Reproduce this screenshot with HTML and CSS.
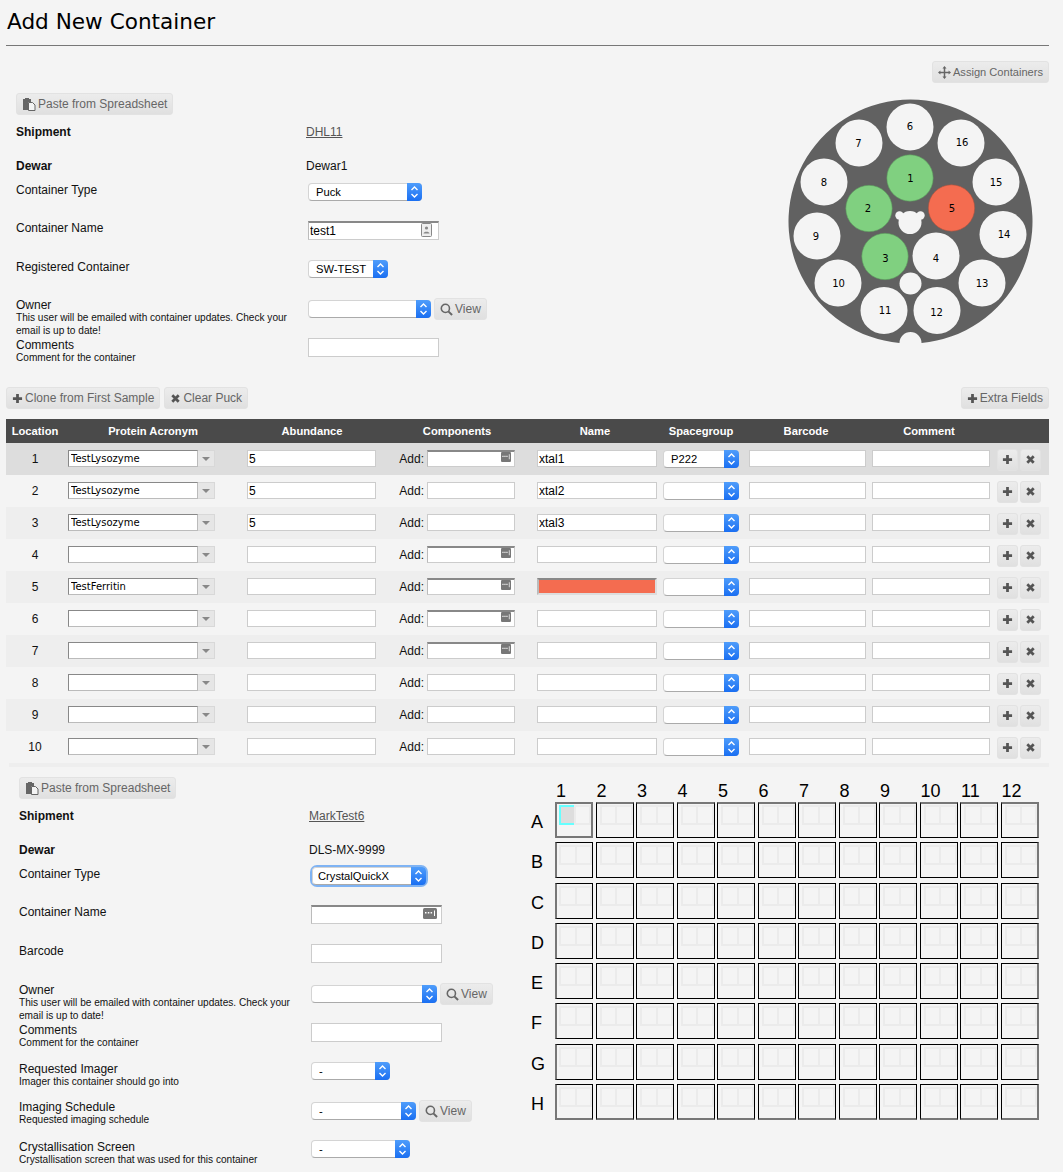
FILE: index.html
```html
<!DOCTYPE html>
<html lang="en">
<head>
    <meta charset="UTF-8">
    <meta name="viewport" content="width=device-width, initial-scale=1.0">
    <title>Add New Container</title>
    <link rel="stylesheet" href="styles.css">
</head>
<body>
    <!-- shared icons -->
    <svg class="sprite" aria-hidden="true">
        <symbol id="i-chevrons" viewBox="0 0 15 18"><path d="M4.5 7 7.5 4 10.5 7M4.5 11 7.5 14 10.5 11" fill="none" stroke="#fff" stroke-width="1.4"/></symbol>
        <symbol id="i-paste" viewBox="0 0 14 14"><path d="M1 2H3V1H7V2H9V5H6V13H1Z" fill="#666"/><path d="M6.500 5.500H10.500L13 8V13.500H6.500Z" fill="#f4f4f4" stroke="#666"/></symbol>
        <symbol id="i-move" viewBox="0 0 14 14"><path d="M7 0 9.200 2.600H7.800V6.200H11.400V4.800L14 7 11.400 9.200V7.800H7.800V11.400H9.200L7 14 4.800 11.400H6.200V7.800H2.600V9.200L0 7 2.600 4.800V6.200H6.200V2.600H4.800Z" fill="#666"/></symbol>
        <symbol id="i-plus" viewBox="0 0 12 12"><path d="M1 6H11M6 1V11" stroke="#555" stroke-width="3" fill="none"/></symbol>
        <symbol id="i-times" viewBox="0 0 12 12"><path d="M2.500 2.500 9.500 9.500M9.500 2.500 2.500 9.500" stroke="#555" stroke-width="3" fill="none"/></symbol>
        <symbol id="i-search" viewBox="0 0 14 14"><circle cx="5.800" cy="5.800" r="4.400" fill="none" stroke="#666" stroke-width="1.700"/><path d="M9 9 13 13" stroke="#666" stroke-width="2.200"/></symbol>
        <symbol id="i-dots" viewBox="0 0 14 11" preserveAspectRatio="none"><rect width="14" height="11" rx="1.500" fill="#777"/><path d="M2 4H3.500V5.500H2ZM4.800 4H6.300V5.500H4.800ZM7.600 4H9.100V5.500H7.600ZM11 2.500H12V8H11Z" fill="#fff"/></symbol>
        <symbol id="i-card" viewBox="0 0 11 14"><rect x=".5" y=".5" width="10" height="13" rx="1" fill="#eee" stroke="#888"/><circle cx="5.500" cy="5" r="1.600" fill="#888"/><path d="M2.500 10.500C2.500 8 8.500 8 8.500 10.500Z" fill="#888"/></symbol>
    </svg>

    <header class="page-title"><h1>Add New Container</h1></header>

    <div class="top-actions">
        <button class="btn btn-assign"><svg class="icon icon-search"><use href="#i-move"/></svg>Assign Containers</button>
    </div>

    <section class="puck-section">
        <form class="form form-puck">
            <button type="button" class="btn btn-paste"><svg class="icon"><use href="#i-paste"/></svg>Paste from Spreadsheet</button>
            <div class="row h34"><div class="label"><strong>Shipment</strong></div><div class="value"><a href="#">DHL11</a></div></div>
            <div class="row h24"><div class="label"><strong>Dewar</strong></div><div class="value">Dewar1</div></div>
            <div class="row h38"><div class="label">Container Type</div><div class="control"><div class="aqua w114"><select><option>Puck</option></select><span class="cap"><svg><use href="#i-chevrons"/></svg></span></div></div></div>
            <div class="row h39"><div class="label">Container Name</div><div class="control"><div class="field field-tall"><input type="text" class="dark-top" value="test1"><svg class="field-icon card"><use href="#i-card"/></svg></div></div></div>
            <div class="row h38"><div class="label">Registered Container</div><div class="control"><div class="aqua w80"><select><option>SW-TEST</option></select><span class="cap"><svg><use href="#i-chevrons"/></svg></span></div></div></div>
            <div class="row h40"><div class="label">Owner<span class="hint">This user will be emailed with container updates. Check your email is up to date!</span></div><div class="control with-view"><div class="aqua w123"><select><option></option></select><span class="cap"><svg><use href="#i-chevrons"/></svg></span></div><button type="button" class="btn"><svg class="icon icon-search"><use href="#i-search"/></svg>View</button></div></div>
            <div class="row h28"><div class="label">Comments<span class="hint">Comment for the container</span></div><div class="control"><input type="text" class="input-form"></div></div>
        </form>

        <svg class="puck" viewBox="786 97 250 250" width="250" height="250">
            <path d="M899.500 343A122 122 0 1 1 921.500 343A11 11 0 0 0 899.500 343Z" fill="#616161"/>
            <g fill="#f4f4f4">
                <circle cx="910" cy="127" r="23.500"/><circle cx="859" cy="143" r="23.500"/><circle cx="961" cy="143" r="23.500"/>
                <circle cx="824" cy="182" r="23.500"/><circle cx="996" cy="182" r="23.500"/><circle cx="817" cy="236" r="23.500"/>
                <circle cx="1003" cy="234.500" r="23.500"/><circle cx="936" cy="256" r="23.500"/><circle cx="838" cy="283" r="23.500"/>
                <circle cx="982" cy="283" r="23.500"/><circle cx="884" cy="310.500" r="23.500"/><circle cx="937" cy="310.500" r="23.500"/>
                <circle cx="910.500" cy="283.500" r="11"/><circle cx="910" cy="222.500" r="11.500"/><circle cx="899.500" cy="215.500" r="4.200"/><circle cx="920.500" cy="215.500" r="4.200"/>
            </g>
            <g fill="#80d080" stroke="#5b9a5c" stroke-width=".6">
                <circle cx="910" cy="178" r="23.200"/><circle cx="869" cy="208.500" r="23.200"/><circle cx="885" cy="256.500" r="23.200"/>
            </g>
            <circle cx="951.500" cy="208" r="23.200" fill="#f46c50" stroke="#a8533f" stroke-width=".6"/>
            <g class="puck-labels">
                <text x="910" y="130">6</text><text x="858.500" y="147">7</text><text x="962" y="146">16</text>
                <text x="824" y="186">8</text><text x="996" y="186">15</text><text x="910.500" y="182">1</text>
                <text x="868" y="212">2</text><text x="952" y="212">5</text><text x="816" y="240">9</text>
                <text x="1004" y="238">14</text><text x="885.500" y="262">3</text><text x="936" y="262">4</text>
                <text x="838.500" y="287">10</text><text x="982" y="287">13</text><text x="885" y="314">11</text><text x="936.500" y="316">12</text>
            </g>
        </svg>
    </section>

    <div class="table-actions">
        <button class="btn"><svg class="icon-sm"><use href="#i-plus"/></svg>Clone from First Sample</button>
        <button class="btn"><svg class="icon-sm"><use href="#i-times"/></svg>Clear Puck</button>
        <button class="btn push-right"><svg class="icon-sm"><use href="#i-plus"/></svg>Extra Fields</button>
    </div>

    <table class="samples">
        <colgroup>
            <col class="c-loc"><col class="c-protein"><col class="c-abund"><col class="c-comp"><col class="c-name"><col class="c-sg"><col class="c-bar"><col class="c-comment"><col class="c-act">
        </colgroup>
        <thead>
            <tr><th>Location</th><th>Protein Acronym</th><th>Abundance</th><th>Components</th><th>Name</th><th>Spacegroup</th><th>Barcode</th><th>Comment</th><th></th></tr>
        </thead>
        <tbody>
            <tr class="hover">
                <td class="loc">1</td>
                <td><div class="combo"><input type="text" value="TestLysozyme"><span class="combo-arrow"></span></div></td>
                <td><input type="text" class="i129" value="5"></td>
                <td><div class="add">Add: <div class="field"><input type="text" class="i88 dark-top"><svg class="field-icon"><use href="#i-dots"/></svg></div></div></td>
                <td><input type="text" class="i120" value="xtal1"></td>
                <td><div class="aqua w76"><select><option>P222</option></select><span class="cap"><svg><use href="#i-chevrons"/></svg></span></div></td>
                <td><input type="text" class="i117"></td>
                <td><input type="text" class="i118"></td>
                <td><div class="row-btns"><button class="btn btn-icon"><svg class="icon-sm"><use href="#i-plus"/></svg></button><button class="btn btn-icon"><svg class="icon-sm"><use href="#i-times"/></svg></button></div></td>
            </tr>
            <tr>
                <td class="loc">2</td>
                <td><div class="combo"><input type="text" value="TestLysozyme"><span class="combo-arrow"></span></div></td>
                <td><input type="text" class="i129" value="5"></td>
                <td><div class="add">Add: <input type="text" class="i88"></div></td>
                <td><input type="text" class="i120" value="xtal2"></td>
                <td><div class="aqua w76"><select><option></option></select><span class="cap"><svg><use href="#i-chevrons"/></svg></span></div></td>
                <td><input type="text" class="i117"></td>
                <td><input type="text" class="i118"></td>
                <td><div class="row-btns"><button class="btn btn-icon"><svg class="icon-sm"><use href="#i-plus"/></svg></button><button class="btn btn-icon"><svg class="icon-sm"><use href="#i-times"/></svg></button></div></td>
            </tr>
            <tr>
                <td class="loc">3</td>
                <td><div class="combo"><input type="text" value="TestLysozyme"><span class="combo-arrow"></span></div></td>
                <td><input type="text" class="i129" value="5"></td>
                <td><div class="add">Add: <input type="text" class="i88"></div></td>
                <td><input type="text" class="i120" value="xtal3"></td>
                <td><div class="aqua w76"><select><option></option></select><span class="cap"><svg><use href="#i-chevrons"/></svg></span></div></td>
                <td><input type="text" class="i117"></td>
                <td><input type="text" class="i118"></td>
                <td><div class="row-btns"><button class="btn btn-icon"><svg class="icon-sm"><use href="#i-plus"/></svg></button><button class="btn btn-icon"><svg class="icon-sm"><use href="#i-times"/></svg></button></div></td>
            </tr>
            <tr>
                <td class="loc">4</td>
                <td><div class="combo"><input type="text"><span class="combo-arrow"></span></div></td>
                <td><input type="text" class="i129"></td>
                <td><div class="add">Add: <div class="field"><input type="text" class="i88 dark-top"><svg class="field-icon"><use href="#i-dots"/></svg></div></div></td>
                <td><input type="text" class="i120"></td>
                <td><div class="aqua w76"><select><option></option></select><span class="cap"><svg><use href="#i-chevrons"/></svg></span></div></td>
                <td><input type="text" class="i117"></td>
                <td><input type="text" class="i118"></td>
                <td><div class="row-btns"><button class="btn btn-icon"><svg class="icon-sm"><use href="#i-plus"/></svg></button><button class="btn btn-icon"><svg class="icon-sm"><use href="#i-times"/></svg></button></div></td>
            </tr>
            <tr>
                <td class="loc">5</td>
                <td><div class="combo"><input type="text" value="TestFerritin"><span class="combo-arrow"></span></div></td>
                <td><input type="text" class="i129"></td>
                <td><div class="add">Add: <div class="field"><input type="text" class="i88 dark-top"><svg class="field-icon"><use href="#i-dots"/></svg></div></div></td>
                <td><input type="text" class="i120 invalid"></td>
                <td><div class="aqua w76"><select><option></option></select><span class="cap"><svg><use href="#i-chevrons"/></svg></span></div></td>
                <td><input type="text" class="i117"></td>
                <td><input type="text" class="i118"></td>
                <td><div class="row-btns"><button class="btn btn-icon"><svg class="icon-sm"><use href="#i-plus"/></svg></button><button class="btn btn-icon"><svg class="icon-sm"><use href="#i-times"/></svg></button></div></td>
            </tr>
            <tr>
                <td class="loc">6</td>
                <td><div class="combo"><input type="text"><span class="combo-arrow"></span></div></td>
                <td><input type="text" class="i129"></td>
                <td><div class="add">Add: <div class="field"><input type="text" class="i88 dark-top"><svg class="field-icon"><use href="#i-dots"/></svg></div></div></td>
                <td><input type="text" class="i120"></td>
                <td><div class="aqua w76"><select><option></option></select><span class="cap"><svg><use href="#i-chevrons"/></svg></span></div></td>
                <td><input type="text" class="i117"></td>
                <td><input type="text" class="i118"></td>
                <td><div class="row-btns"><button class="btn btn-icon"><svg class="icon-sm"><use href="#i-plus"/></svg></button><button class="btn btn-icon"><svg class="icon-sm"><use href="#i-times"/></svg></button></div></td>
            </tr>
            <tr>
                <td class="loc">7</td>
                <td><div class="combo"><input type="text"><span class="combo-arrow"></span></div></td>
                <td><input type="text" class="i129"></td>
                <td><div class="add">Add: <div class="field"><input type="text" class="i88 dark-top"><svg class="field-icon"><use href="#i-dots"/></svg></div></div></td>
                <td><input type="text" class="i120"></td>
                <td><div class="aqua w76"><select><option></option></select><span class="cap"><svg><use href="#i-chevrons"/></svg></span></div></td>
                <td><input type="text" class="i117"></td>
                <td><input type="text" class="i118"></td>
                <td><div class="row-btns"><button class="btn btn-icon"><svg class="icon-sm"><use href="#i-plus"/></svg></button><button class="btn btn-icon"><svg class="icon-sm"><use href="#i-times"/></svg></button></div></td>
            </tr>
            <tr>
                <td class="loc">8</td>
                <td><div class="combo"><input type="text"><span class="combo-arrow"></span></div></td>
                <td><input type="text" class="i129"></td>
                <td><div class="add">Add: <input type="text" class="i88"></div></td>
                <td><input type="text" class="i120"></td>
                <td><div class="aqua w76"><select><option></option></select><span class="cap"><svg><use href="#i-chevrons"/></svg></span></div></td>
                <td><input type="text" class="i117"></td>
                <td><input type="text" class="i118"></td>
                <td><div class="row-btns"><button class="btn btn-icon"><svg class="icon-sm"><use href="#i-plus"/></svg></button><button class="btn btn-icon"><svg class="icon-sm"><use href="#i-times"/></svg></button></div></td>
            </tr>
            <tr>
                <td class="loc">9</td>
                <td><div class="combo"><input type="text"><span class="combo-arrow"></span></div></td>
                <td><input type="text" class="i129"></td>
                <td><div class="add">Add: <input type="text" class="i88"></div></td>
                <td><input type="text" class="i120"></td>
                <td><div class="aqua w76"><select><option></option></select><span class="cap"><svg><use href="#i-chevrons"/></svg></span></div></td>
                <td><input type="text" class="i117"></td>
                <td><input type="text" class="i118"></td>
                <td><div class="row-btns"><button class="btn btn-icon"><svg class="icon-sm"><use href="#i-plus"/></svg></button><button class="btn btn-icon"><svg class="icon-sm"><use href="#i-times"/></svg></button></div></td>
            </tr>
            <tr>
                <td class="loc">10</td>
                <td><div class="combo"><input type="text"><span class="combo-arrow"></span></div></td>
                <td><input type="text" class="i129"></td>
                <td><div class="add">Add: <input type="text" class="i88"></div></td>
                <td><input type="text" class="i120"></td>
                <td><div class="aqua w76"><select><option></option></select><span class="cap"><svg><use href="#i-chevrons"/></svg></span></div></td>
                <td><input type="text" class="i117"></td>
                <td><input type="text" class="i118"></td>
                <td><div class="row-btns"><button class="btn btn-icon"><svg class="icon-sm"><use href="#i-plus"/></svg></button><button class="btn btn-icon"><svg class="icon-sm"><use href="#i-times"/></svg></button></div></td>
            </tr>
        </tbody>
    </table>
    <div class="table-end"></div>

    <section class="plate-section">
        <form class="form form-plate">
            <button type="button" class="btn btn-paste"><svg class="icon"><use href="#i-paste"/></svg>Paste from Spreadsheet</button>
            <div class="row h34"><div class="label"><strong>Shipment</strong></div><div class="value"><a href="#">MarkTest6</a></div></div>
            <div class="row h24"><div class="label"><strong>Dewar</strong></div><div class="value">DLS-MX-9999</div></div>
            <div class="row h38"><div class="label">Container Type</div><div class="control"><div class="aqua w114 focused"><select><option>CrystalQuickX</option></select><span class="cap"><svg><use href="#i-chevrons"/></svg></span></div></div></div>
            <div class="row h39"><div class="label">Container Name</div><div class="control"><div class="field field-tall"><input type="text" class="dark-top"><svg class="field-icon"><use href="#i-dots"/></svg></div></div></div>
            <div class="row h39"><div class="label">Barcode</div><div class="control"><input type="text" class="input-form"></div></div>
            <div class="row h40"><div class="label">Owner<span class="hint">This user will be emailed with container updates. Check your email is up to date!</span></div><div class="control with-view"><div class="aqua w126"><select><option></option></select><span class="cap"><svg><use href="#i-chevrons"/></svg></span></div><button type="button" class="btn"><svg class="icon icon-search"><use href="#i-search"/></svg>View</button></div></div>
            <div class="row h39"><div class="label">Comments<span class="hint">Comment for the container</span></div><div class="control"><input type="text" class="input-form"></div></div>
            <div class="row h38"><div class="label">Requested Imager<span class="hint">Imager this container should go into</span></div><div class="control"><div class="aqua w79"><select><option>-</option></select><span class="cap"><svg><use href="#i-chevrons"/></svg></span></div></div></div>
            <div class="row h40"><div class="label">Imaging Schedule<span class="hint">Requested imaging schedule</span></div><div class="control with-view"><div class="aqua w105"><select><option>-</option></select><span class="cap"><svg><use href="#i-chevrons"/></svg></span></div><button type="button" class="btn"><svg class="icon icon-search"><use href="#i-search"/></svg>View</button></div></div>
            <div class="row h33"><div class="label">Crystallisation Screen<span class="hint">Crystallisation screen that was used for this container</span></div><div class="control"><div class="aqua w99"><select><option>-</option></select><span class="cap"><svg><use href="#i-chevrons"/></svg></span></div></div></div>
        </form>

        <div class="plate">
            <div class="plate-head"><span>1</span><span>2</span><span>3</span><span>4</span><span>5</span><span>6</span><span>7</span><span>8</span><span>9</span><span>10</span><span>11</span><span>12</span></div>
            <div class="plate-row"><b>A</b><i class="well well-active"></i><i class="well"></i><i class="well"></i><i class="well"></i><i class="well"></i><i class="well"></i><i class="well"></i><i class="well"></i><i class="well"></i><i class="well"></i><i class="well"></i><i class="well"></i></div>
            <div class="plate-row"><b>B</b><i class="well"></i><i class="well"></i><i class="well"></i><i class="well"></i><i class="well"></i><i class="well"></i><i class="well"></i><i class="well"></i><i class="well"></i><i class="well"></i><i class="well"></i><i class="well"></i></div>
            <div class="plate-row"><b>C</b><i class="well"></i><i class="well"></i><i class="well"></i><i class="well"></i><i class="well"></i><i class="well"></i><i class="well"></i><i class="well"></i><i class="well"></i><i class="well"></i><i class="well"></i><i class="well"></i></div>
            <div class="plate-row"><b>D</b><i class="well"></i><i class="well"></i><i class="well"></i><i class="well"></i><i class="well"></i><i class="well"></i><i class="well"></i><i class="well"></i><i class="well"></i><i class="well"></i><i class="well"></i><i class="well"></i></div>
            <div class="plate-row"><b>E</b><i class="well"></i><i class="well"></i><i class="well"></i><i class="well"></i><i class="well"></i><i class="well"></i><i class="well"></i><i class="well"></i><i class="well"></i><i class="well"></i><i class="well"></i><i class="well"></i></div>
            <div class="plate-row"><b>F</b><i class="well"></i><i class="well"></i><i class="well"></i><i class="well"></i><i class="well"></i><i class="well"></i><i class="well"></i><i class="well"></i><i class="well"></i><i class="well"></i><i class="well"></i><i class="well"></i></div>
            <div class="plate-row"><b>G</b><i class="well"></i><i class="well"></i><i class="well"></i><i class="well"></i><i class="well"></i><i class="well"></i><i class="well"></i><i class="well"></i><i class="well"></i><i class="well"></i><i class="well"></i><i class="well"></i></div>
            <div class="plate-row"><b>H</b><i class="well"></i><i class="well"></i><i class="well"></i><i class="well"></i><i class="well"></i><i class="well"></i><i class="well"></i><i class="well"></i><i class="well"></i><i class="well"></i><i class="well"></i><i class="well"></i></div>
        </div>
    </section>
</body>
</html>
```

FILE: styles.css
```css
* {
    box-sizing: border-box;
}

body {
    margin: 0;
    padding: 0 14px 0 6px;
    background: #f4f4f4;
    color: #111;
    font-family: "Liberation Sans", Arial, sans-serif;
    font-size: 12px;
    line-height: 16px;
}

.sprite {
    display: none;
}

/* title */
.page-title {
    height: 46px;
    border-bottom: 1px solid #777;
}

h1 {
    margin: 0;
    padding-left: 1px;
    font-family: "DejaVu Sans", sans-serif;
    font-size: 21.6px;
    font-weight: normal;
    line-height: 43px;
    color: #000;
}

/* buttons */
.btn {
    display: inline-flex;
    align-items: center;
    gap: 2px;
    height: 22px;
    padding: 0 5px;
    border: 1px solid #e2e2e2;
    border-radius: 3px;
    background: linear-gradient(#ececec, #e0e0e0);
    color: #666;
    font: 12px "Liberation Sans", Arial, sans-serif;
    white-space: nowrap;
}

.icon {
    width: 14px;
    height: 14px;
}

.icon-search {
    width: 13px;
    height: 13px;
}

.icon-sm {
    width: 11px;
    height: 11px;
}

.btn-assign {
    font-size: 11.1px;
}

.btn-paste {
    display: flex;
    width: fit-content;
    margin-bottom: 9px;
}

.btn-icon {
    justify-content: center;
    width: 21px;
    padding: 0;
}

.top-actions {
    display: flex;
    justify-content: flex-end;
    margin-top: 15px;
    margin-bottom: 10px;
}

.table-actions {
    display: flex;
    gap: 4px;
    margin-top: 22px;
    margin-bottom: 10px;
}

.push-right {
    margin-left: auto;
}

/* forms */
.puck-section,
.plate-section {
    display: flex;
    justify-content: space-between;
    align-items: flex-start;
}

.form-puck {
    width: 500px;
    padding-left: 10px;
}

.form-plate {
    width: 525px;
    padding-left: 13px;
}

.row {
    display: grid;
    grid-template-columns: 292px 1fr;
}

.h24 { height: 24px; }
.h28 { height: 28px; }
.h33 { height: 33px; }
.h34 { height: 34px; }
.h38 { height: 38px; }
.h39 { height: 39px; }
.h40 { height: 40px; }

.value {
    margin-left: -2px;
}

.value a {
    color: #555;
}

.hint {
    display: block;
    width: 280px;
    margin-top: -2px;
    font-size: 10.1px;
    line-height: 13px;
}

.control {
    padding-top: 1px;
}

.with-view {
    display: flex;
    align-items: flex-start;
    gap: 3px;
}

.with-view .aqua {
    margin-top: 2px;
}

input {
    height: 17px;
    padding: 0 1px;
    border: 1px solid #ccc;
    border-radius: 0;
    background: #fff;
    color: #000;
    font: 12px "Liberation Sans", Arial, sans-serif;
}

.input-form {
    display: block;
    width: 131px;
    height: 19px;
}

.field {
    position: relative;
    width: fit-content;
}

.field input {
    display: block;
}

.field-tall input {
    width: 131px;
    height: 19px;
}

.dark-top {
    border-top: 2px solid #888;
    border-left-color: #bbb;
}

.field-icon {
    position: absolute;
    top: 2px;
    right: 4px;
    width: 10px;
    height: 10px;
}

.field-tall .field-icon {
    top: 3px;
    right: 5px;
    width: 14px;
    height: 11px;
}

.field-tall .card {
    top: 2px;
    right: 7px;
    width: 11px;
    height: 14px;
}

/* mac style selects */
.aqua {
    position: relative;
    height: 18px;
}

.aqua select {
    display: block;
    width: 100%;
    height: 18px;
    padding: 0 15px 0 7px;
    border: 1px solid #d4d4d4;
    border-bottom-color: #aaa;
    border-radius: 4px;
    background: #fff;
    color: #000;
    font: 11.2px "Liberation Sans", Arial, sans-serif;
    appearance: none;
}

.cap {
    position: absolute;
    top: 0;
    right: 0;
    width: 15px;
    height: 18px;
    border-radius: 0 4px 4px 0;
    background: linear-gradient(#4f9dfb, #1a6ff2);
}

.cap svg {
    display: block;
    width: 15px;
    height: 18px;
}

.focused {
    margin-left: 1px;
    border-radius: 5px;
    box-shadow: 0 0 0 2px #7fb3f3;
}

.focused select {
    padding-left: 5px;
}

.w76 { width: 76px; }
.w79 { width: 79px; }
.w80 { width: 80px; }
.w99 { width: 99px; }
.w105 { width: 105px; }
.w114 { width: 114px; }
.w123 { width: 123px; }
.w126 { width: 126px; }

/* puck drawing */
.puck {
    margin-top: 4px;
    margin-right: 13px;
}

.puck-labels text {
    font-family: "DejaVu Sans", sans-serif;
    font-size: 10px;
    text-anchor: middle;
    fill: #000;
}

/* sample table */
.samples {
    width: 1043px;
    border-collapse: collapse;
    table-layout: fixed;
}

.c-loc { width: 58px; }
.c-protein { width: 178px; }
.c-abund { width: 140px; }
.c-comp { width: 150px; }
.c-name { width: 126px; }
.c-sg { width: 86px; }
.c-bar { width: 124px; }
.c-comment { width: 122px; }
.c-act { width: 59px; }

.samples th {
    height: 24px;
    padding: 0;
    background: #4a4a4a;
    color: #fff;
    font-size: 11.2px;
    font-weight: bold;
    text-align: center;
}

.samples td {
    height: 32px;
    padding: 0 0 1px 5px;
    vertical-align: middle;
}

.samples tbody tr:nth-child(odd) {
    background: #eee;
}

.samples tbody tr.hover {
    background: #ddd;
}

.samples td.loc {
    padding: 0;
    text-align: center;
}

.samples td:nth-child(2) {
    padding-left: 4px;
}

.samples td:nth-child(8) {
    padding-left: 4px;
}

.samples td input {
    display: block;
}

.samples .aqua {
    margin-top: 1px;
}

.i88 { width: 88px; }
.i117 { width: 117px; }
.i118 { width: 118px; }
.i120 { width: 120px; }
.i129 { width: 129px; }

.samples td .invalid {
    background: #f46c50;
    border: 2px solid #ddd;
    border-top-color: #888;
    border-left-color: #bbb;
}

.add {
    display: flex;
    align-items: center;
    justify-content: flex-end;
    width: 128px;
    gap: 3px;
}

.combo {
    display: flex;
}

.combo input {
    width: 130px;
    padding-left: 2px;
    border: 1px solid #bbb;
    border-top-color: #888;
    border-left-color: #888;
    font: 10px "DejaVu Sans", sans-serif;
}

.combo-arrow {
    position: relative;
    width: 17px;
    height: 17px;
    border: 1px solid #d8d8d8;
    border-left: 0;
    background: #e6e6e6;
}

.combo-arrow::after {
    content: "";
    position: absolute;
    top: 6px;
    left: 4px;
    border-top: 4px solid #888;
    border-left: 4px solid transparent;
    border-right: 4px solid transparent;
}

.row-btns {
    display: flex;
    gap: 2px;
    margin-top: 2px;
    padding-left: 2px;
}

.table-end {
    height: 4px;
    margin-left: 3px;
    background: #eee;
}

/* second form + plate */
.plate-section {
    margin-top: 10px;
}

.plate {
    flex: none;
    width: 518px;
    margin-top: 5px;
}

.plate-head {
    display: flex;
    height: 20px;
    padding-left: 25px;
    font-size: 18px;
    line-height: 18px;
    color: #000;
}

.plate-head span {
    width: 40.5px;
}

.plate-row {
    display: flex;
    height: 40.3px;
}

.plate-row b {
    width: 24px;
    font-size: 18px;
    font-weight: normal;
    line-height: 40px;
    color: #000;
}

.well {
    display: flex;
    align-items: flex-start;
    width: 38px;
    height: 36px;
    margin-right: 2.5px;
    padding: 2px 0 0 3px;
    border: 1px solid #000;
}

.well::before,
.well::after {
    content: "";
    width: 16px;
    height: 16px;
    border: 2px solid #ebebeb;
}

.well::after {
    margin-left: -2px;
}

.plate-row:nth-child(2) .well {
    border-top: 2px solid #777;
    padding-top: 1px;
}

.plate-row:last-child .well {
    border-bottom: 2px solid #777;
}

.well:nth-child(2) {
    border-left: 2px solid #777;
    padding-left: 2px;
}

.well:last-child {
    border-right: 2px solid #777;
}

.plate-row .well-active {
    border-color: #777;
    border-width: 2px;
}

.well-active::before {
    border: 2px solid #6ff;
    background: #ddd;
}
```
